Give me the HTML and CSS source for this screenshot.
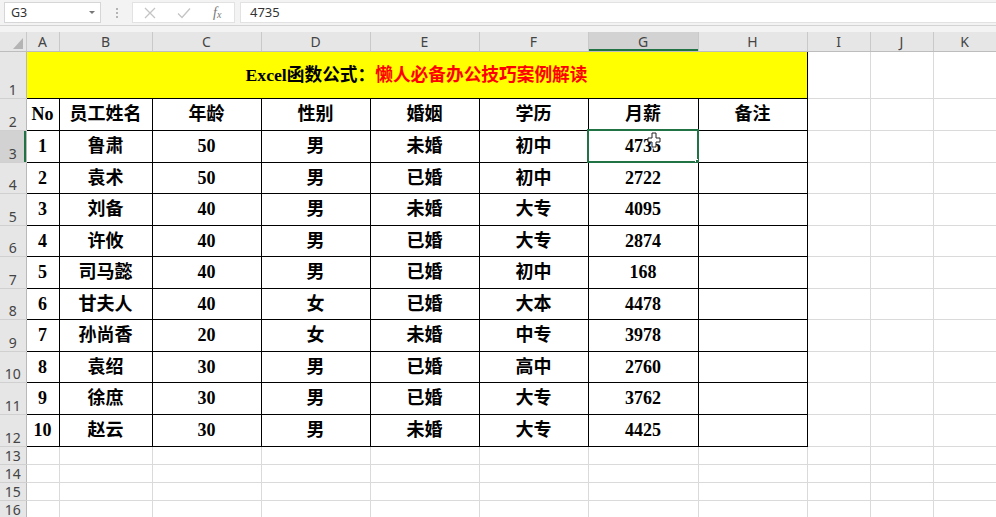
FILE: index.html
```html
<!DOCTYPE html>
<html lang="zh-CN">
<head>
<meta charset="utf-8">
<title>Excel</title>
<link rel="stylesheet" href="styles.css">
</head>
<body>
<div class="fbar">
  <div class="namebox"><span>G3</span><span class="caret"></span></div>
  <div class="grip"><i></i><i></i><i></i></div>
  <div class="fxbox">
    <svg class="ico" width="14" height="14" viewBox="0 0 14 14"><path d="M2 2 L12 12 M12 2 L2 12" stroke="#c4c4c4" stroke-width="1.3" fill="none"/></svg>
    <svg class="ico" width="16" height="14" viewBox="0 0 16 14"><path d="M2 7.5 L6 11.5 L14 2.5" stroke="#c4c4c4" stroke-width="1.3" fill="none"/></svg>
    <span class="fx">f<sub>x</sub></span>
  </div>
  <div class="formula">4735</div>
</div>
<div class="gap"></div>
<table class="sheet">
  <colgroup>
    <col class="c-rh"><col class="c-a"><col class="c-b"><col class="c-w"><col class="c-w"><col class="c-w"><col class="c-w"><col class="c-g"><col class="c-w"><col class="c-s"><col class="c-s"><col class="c-s">
  </colgroup>
  <tr class="hdr">
    <th class="corner"><span class="tri"></span></th>
    <th>A</th><th>B</th><th>C</th><th>D</th><th>E</th><th>F</th><th class="sel">G</th><th>H</th><th>I</th><th>J</th><th>K</th>
  </tr>
  <tr class="h47">
    <td class="rh">1</td>
    <td class="title" colspan="8"><span class="blk">Excel函数公式：</span><span class="red">懒人必备办公技巧案例解读</span></td>
    <td class="e"></td><td class="e"></td><td class="e"></td>
  </tr>
  <tr class="h32">
    <td class="rh">2</td>
    <td class="d">No</td><td class="d">员工姓名</td><td class="d">年龄</td><td class="d">性别</td><td class="d">婚姻</td><td class="d">学历</td><td class="d">月薪</td><td class="d">备注</td>
    <td class="e"></td><td class="e"></td><td class="e"></td>
  </tr>
  <tr class="h32">
    <td class="rh rsel">3</td>
    <td class="d">1</td><td class="d">鲁肃</td><td class="d">50</td><td class="d">男</td><td class="d">未婚</td><td class="d">初中</td><td class="d active">4735<svg class="cursor" width="14" height="16" viewBox="0 0 14 16"><path d="M5 1 H9 V6 H13 V10 H9 V15 H5 V10 H1 V6 H5 Z" fill="#fff" stroke="#222" stroke-width="1"/></svg></td><td class="d"></td>
    <td class="e"></td><td class="e"></td><td class="e"></td>
  </tr>
  <tr class="h31">
    <td class="rh">4</td>
    <td class="d">2</td><td class="d">袁术</td><td class="d">50</td><td class="d">男</td><td class="d">已婚</td><td class="d">初中</td><td class="d">2722</td><td class="d"></td>
    <td class="e"></td><td class="e"></td><td class="e"></td>
  </tr>
  <tr class="h32">
    <td class="rh">5</td>
    <td class="d">3</td><td class="d">刘备</td><td class="d">40</td><td class="d">男</td><td class="d">未婚</td><td class="d">大专</td><td class="d">4095</td><td class="d"></td>
    <td class="e"></td><td class="e"></td><td class="e"></td>
  </tr>
  <tr class="h31">
    <td class="rh">6</td>
    <td class="d">4</td><td class="d">许攸</td><td class="d">40</td><td class="d">男</td><td class="d">已婚</td><td class="d">大专</td><td class="d">2874</td><td class="d"></td>
    <td class="e"></td><td class="e"></td><td class="e"></td>
  </tr>
  <tr class="h32">
    <td class="rh">7</td>
    <td class="d">5</td><td class="d">司马懿</td><td class="d">40</td><td class="d">男</td><td class="d">已婚</td><td class="d">初中</td><td class="d">168</td><td class="d"></td>
    <td class="e"></td><td class="e"></td><td class="e"></td>
  </tr>
  <tr class="h31">
    <td class="rh">8</td>
    <td class="d">6</td><td class="d">甘夫人</td><td class="d">40</td><td class="d">女</td><td class="d">已婚</td><td class="d">大本</td><td class="d">4478</td><td class="d"></td>
    <td class="e"></td><td class="e"></td><td class="e"></td>
  </tr>
  <tr class="h32">
    <td class="rh">9</td>
    <td class="d">7</td><td class="d">孙尚香</td><td class="d">20</td><td class="d">女</td><td class="d">未婚</td><td class="d">中专</td><td class="d">3978</td><td class="d"></td>
    <td class="e"></td><td class="e"></td><td class="e"></td>
  </tr>
  <tr class="h31">
    <td class="rh">10</td>
    <td class="d">8</td><td class="d">袁绍</td><td class="d">30</td><td class="d">男</td><td class="d">已婚</td><td class="d">高中</td><td class="d">2760</td><td class="d"></td>
    <td class="e"></td><td class="e"></td><td class="e"></td>
  </tr>
  <tr class="h32">
    <td class="rh">11</td>
    <td class="d">9</td><td class="d">徐庶</td><td class="d">30</td><td class="d">男</td><td class="d">已婚</td><td class="d">大专</td><td class="d">3762</td><td class="d"></td>
    <td class="e"></td><td class="e"></td><td class="e"></td>
  </tr>
  <tr class="h32">
    <td class="rh">12</td>
    <td class="d">10</td><td class="d">赵云</td><td class="d">30</td><td class="d">男</td><td class="d">未婚</td><td class="d">大专</td><td class="d">4425</td><td class="d"></td>
    <td class="e"></td><td class="e"></td><td class="e"></td>
  </tr>
  <tr class="h18">
    <td class="rh">13</td>
    <td class="e"></td><td class="e"></td><td class="e"></td><td class="e"></td><td class="e"></td><td class="e"></td><td class="e"></td><td class="e"></td><td class="e"></td><td class="e"></td><td class="e"></td>
  </tr>
  <tr class="h18">
    <td class="rh">14</td>
    <td class="e"></td><td class="e"></td><td class="e"></td><td class="e"></td><td class="e"></td><td class="e"></td><td class="e"></td><td class="e"></td><td class="e"></td><td class="e"></td><td class="e"></td>
  </tr>
  <tr class="h18">
    <td class="rh">15</td>
    <td class="e"></td><td class="e"></td><td class="e"></td><td class="e"></td><td class="e"></td><td class="e"></td><td class="e"></td><td class="e"></td><td class="e"></td><td class="e"></td><td class="e"></td>
  </tr>
  <tr class="h18">
    <td class="rh">16</td>
    <td class="e"></td><td class="e"></td><td class="e"></td><td class="e"></td><td class="e"></td><td class="e"></td><td class="e"></td><td class="e"></td><td class="e"></td><td class="e"></td><td class="e"></td>
  </tr>
</table>
</body>
</html>
```

FILE: styles.css
```css
html, body {
  margin: 0;
  padding: 0;
}
body {
  width: 996px;
  height: 517px;
  overflow: hidden;
  background: #ffffff;
  font-family: "Noto Sans", "Open Sans", sans-serif;
}

/* formula bar */
.fbar {
  display: flex;
  align-items: center;
  height: 25px;
  background: #f3f3f3;
  border-bottom: 1px solid #d4d4d4;
  padding-left: 4px;
}
.namebox {
  width: 95px;
  height: 20px;
  background: #fff;
  border: 1px solid #d6d6d6;
  display: flex;
  align-items: center;
  justify-content: space-between;
  padding: 0 5px 0 6px;
  box-sizing: border-box;
  width: 97px;
  height: 21px;
  font-size: 12.5px;
  color: #333;
}
.caret {
  width: 0;
  height: 0;
  border-left: 3px solid transparent;
  border-right: 3px solid transparent;
  border-top: 3px solid #777;
}
.grip {
  width: 31px;
  display: flex;
  flex-direction: column;
  align-items: center;
  gap: 2px;
}
.grip i {
  display: block;
  width: 2px;
  height: 2px;
  background: #b4b4b4;
}
.fxbox {
  width: 103px;
  height: 21px;
  box-sizing: border-box;
  background: #fff;
  border: 1px solid #e2e2e2;
  display: flex;
  align-items: center;
  padding-left: 10px;
  gap: 19px;
  margin-right: 5px;
}
.fx {
  font-family: "Liberation Serif", serif;
  font-style: italic;
  font-size: 14px;
  color: #777;
  margin-left: 2px;
}
.fx sub {
  font-size: 10px;
  vertical-align: -1px;
}
.formula {
  flex: 1;
  height: 21px;
  box-sizing: border-box;
  background: #fff;
  border: 1px solid #e2e2e2;
  border-right: none;
  font-size: 13px;
  color: #333;
  padding-left: 9px;
  line-height: 19px;
}
.gap {
  height: 6px;
  background: #f3f3f3;
}

/* sheet */
.sheet {
  border-collapse: collapse;
  table-layout: fixed;
  width: 996px;
}
.c-rh { width: 26px; }
.c-a { width: 33px; }
.c-b { width: 93px; }
.c-w { width: 109px; }
.c-g { width: 110px; }
.c-s { width: 63px; }

.sheet td, .sheet th {
  padding: 0;
  overflow: hidden;
  white-space: nowrap;
}
.hdr { height: 19px; }
.hdr th {
  background: #e6e6e6;
  border-right: 1px solid #c9c9c9;
  border-bottom: 1px solid #bdbdbd;
  font-weight: normal;
  font-size: 14px;
  color: #444;
  line-height: 17px;
  text-align: center;
  vertical-align: middle;
}
.hdr th.sel {
  background: #d2d2d2;
  box-shadow: inset 0 -2px 0 #217346;
}
.corner {
  position: relative;
}
.tri {
  position: absolute;
  right: 3px;
  bottom: 2px;
  width: 0;
  height: 0;
  border-left: 10px solid transparent;
  border-bottom: 11px solid #b4b4b4;
}

.h47 { height: 47px; }
.h32 { height: 32px; }
.h31 { height: 31px; }
.h18 { height: 18px; }

.rh {
  background: #e6e6e6;
  border-right: 1px solid #b9b9b9;
  border-bottom: 1px solid #d0d0d0;
  font-size: 14px;
  color: #444;
  text-align: center;
  vertical-align: bottom;
  line-height: 16px;
}
.rh.rsel {
  background: #d2d2d2;
  box-shadow: inset -2px 0 0 #217346;
}

.e {
  border: 1px solid #dadada;
}

.title {
  background: #ffff00;
  border: 1px solid #000;
  border-top: 1px solid #dadada;
  text-align: center;
  vertical-align: middle;
  font-family: "Liberation Serif", "Noto Sans CJK SC", serif;
  font-weight: bold;
  font-size: 17.7px;
  line-height: 22px;
}
.blk { color: #000; }
.red { color: #ff0000; }

.d {
  border: 1px solid #000;
  text-align: center;
  vertical-align: middle;
  font-family: "Liberation Serif", "Noto Sans CJK SC", serif;
  font-weight: bold;
  font-size: 18px;
  line-height: 22px;
  color: #000;
}
.active {
  position: relative;
  outline: 2px solid #217346;
  outline-offset: -1px;
  overflow: visible;
}
.active::after {
  content: "";
  position: absolute;
  right: -4px;
  bottom: -4px;
  width: 5px;
  height: 5px;
  background: #217346;
  border: 1px solid #fff;
}
.cursor {
  position: absolute;
  left: 58px;
  top: 1px;
}
```
